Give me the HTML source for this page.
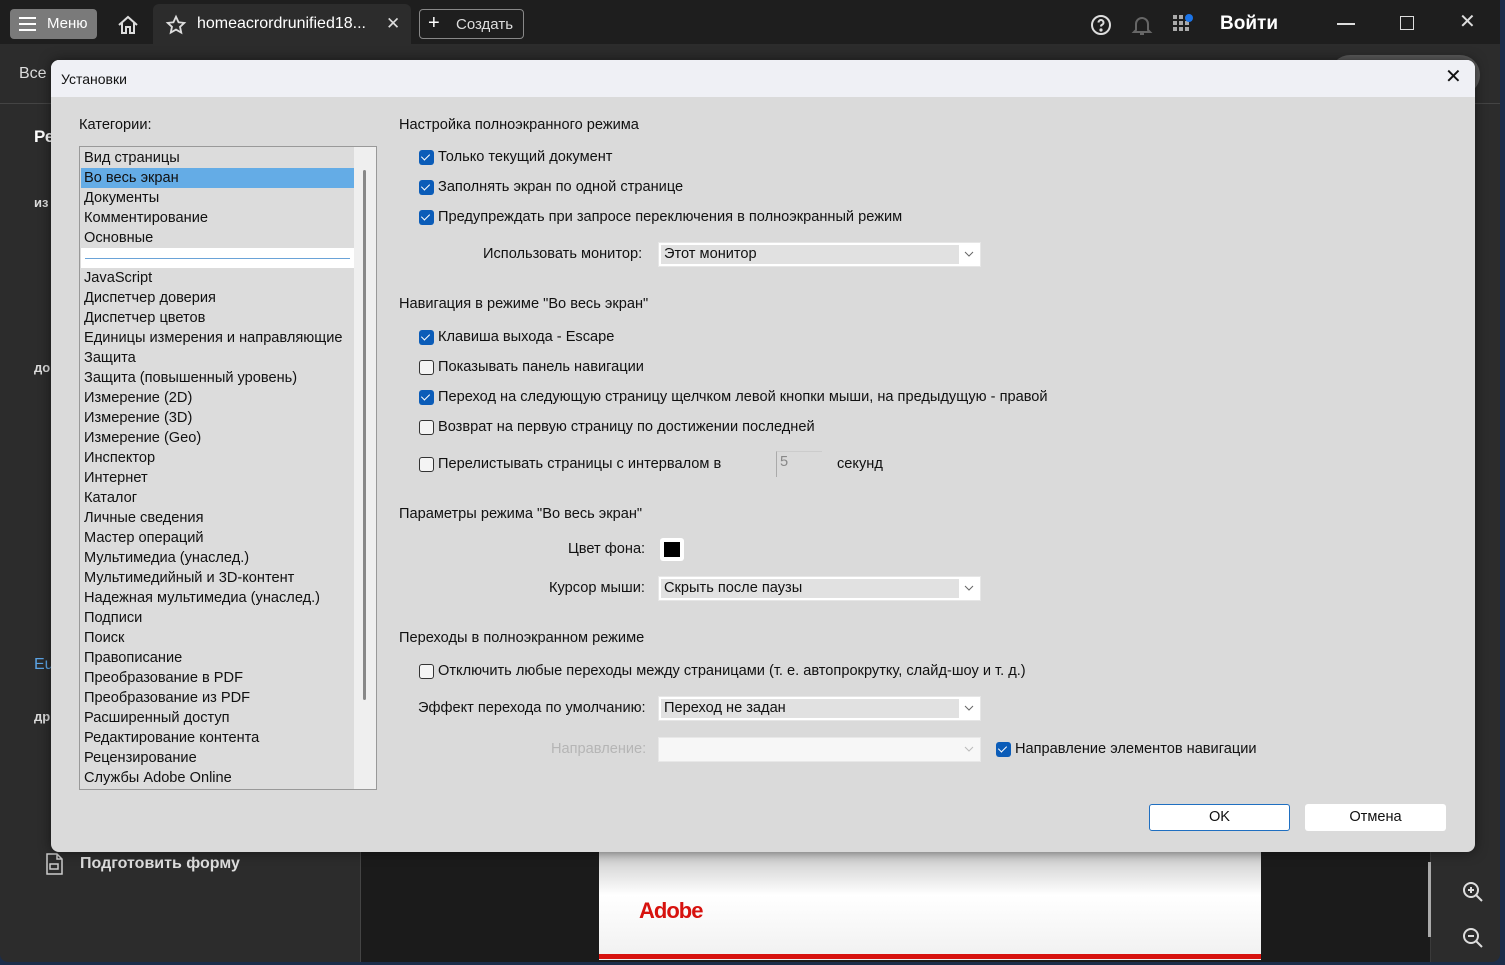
<!DOCTYPE html>
<html><head><meta charset="utf-8"><style>
*{margin:0;padding:0;box-sizing:border-box}
body{width:1505px;height:965px;overflow:hidden;background:#1c2d4a;font-family:"Liberation Sans",Arial,sans-serif;position:relative}
.a{position:absolute}
.t{position:absolute;font-size:14.6px;color:#111;white-space:nowrap;line-height:20px}
.cb{position:absolute;width:15px;height:15px;border-radius:3px}
.on{background:#0b5cb8}
.on::after{content:"";position:absolute;left:4px;top:2px;width:4px;height:7px;border:solid #fff;border-width:0 1.5px 1.5px 0;transform:rotate(45deg)}
.off{border:1px solid #333;background:#f4f4f4}
.sel{position:absolute;left:658px;width:323px;height:25px;background:#fff;border:1px solid #e6e6e6}
.sel .in{position:absolute;left:2px;top:2px;width:298px;height:19px;background:#e1e1e1;font-size:14.6px;line-height:19px;padding-left:3px;color:#111}
.sel svg{position:absolute;right:6px;top:8px}
.li{position:absolute;left:84px;font-size:14.6px;line-height:20px;color:#111;white-space:nowrap}
</style></head><body>
<div class="a" style="left:0;top:0;width:1500px;height:962px;background:#2c2c2c;border-radius:0 0 8px 8px;overflow:hidden">
 <div class="a" style="left:0;top:0;width:1500px;height:44px;background:#1e1e1e"></div>
 <div class="a" style="left:153px;top:4px;width:258px;height:40px;background:#2c2c2c;border-radius:6px 6px 0 0"></div>
 <div class="a" style="left:10px;top:9px;width:87px;height:30px;background:#7a7a7a;border-radius:4px"></div>
 <div class="a" style="left:19px;top:17px;width:17px;height:2px;background:#fff;box-shadow:0 6px 0 #fff,0 12px 0 #fff"></div>
 <div class="t" style="left:47px;top:14px;color:#fff;font-size:15px">Меню</div>
 <svg class="a" style="left:116px;top:13px" width="24" height="24" viewBox="0 0 24 24" fill="none" stroke="#ddd" stroke-width="2"><path d="M3 12L12 4l9 8M6 10v10h4v-6h4v6h4V10"/></svg>
 <svg class="a" style="left:165px;top:14px" width="22" height="22" viewBox="0 0 24 24" fill="none" stroke="#ddd" stroke-width="2"><path d="M12 3l2.8 6 6.2.7-4.6 4.3 1.3 6.3L12 17l-5.7 3.3 1.3-6.3L3 9.7 9.2 9z"/></svg>
 <div class="t" style="left:197px;top:14px;color:#fff;font-size:16px">homeacrordrunified18...</div>
 <div class="t" style="left:386px;top:14px;color:#ddd;font-size:17px">✕</div>
 <div class="a" style="left:419px;top:9px;width:105px;height:30px;border:1px solid #888;border-radius:4px"></div>
 <div class="t" style="left:428px;top:13px;color:#fff;font-size:20px">+</div>
 <div class="t" style="left:456px;top:15px;color:#ddd;font-size:15px">Создать</div>
 <svg class="a" style="left:1090px;top:14px" width="22" height="22" viewBox="0 0 22 22" fill="none" stroke="#ddd" stroke-width="2"><circle cx="11" cy="11" r="9"/><path d="M8.5 8.5a2.5 2.5 0 1 1 3.5 2.3c-.8.4-1 1-1 1.7"/><circle cx="11" cy="16" r=".6" fill="#ddd"/></svg>
 <svg class="a" style="left:1131px;top:14px" width="22" height="22" viewBox="0 0 22 22" fill="none" stroke="#666" stroke-width="2"><path d="M5 16V10a6 6 0 0 1 12 0v6l2 2H3zM9 20h4"/></svg>
 <svg class="a" style="left:1172px;top:14px" width="22" height="20"><g fill="#aaa"><rect x="1" y="1" width="4" height="4"/><rect x="7" y="1" width="4" height="4"/><rect x="1" y="7" width="4" height="4"/><rect x="7" y="7" width="4" height="4"/><rect x="13" y="7" width="4" height="4"/><rect x="1" y="13" width="4" height="4"/><rect x="7" y="13" width="4" height="4"/><rect x="13" y="13" width="4" height="4"/></g><circle cx="17" cy="4" r="4" fill="#1b74e8"/></svg>
 <div class="t" style="left:1220px;top:14px;color:#fff;font-size:19px;font-weight:bold">Войти</div>
 <div class="a" style="left:1337px;top:23px;width:18px;height:2px;background:#ddd"></div>
 <div class="a" style="left:1400px;top:16px;width:14px;height:14px;border:1.5px solid #ddd"></div>
 <div class="t" style="left:1459px;top:12px;color:#ddd;font-size:20px">✕</div>
 <div class="a" style="left:0;top:103px;width:1500px;height:1px;background:#444"></div>
 <div class="t" style="left:19px;top:64px;color:#ddd;font-size:16px">Все</div>
 <div class="a" style="left:1330px;top:55px;width:150px;height:40px;background:#5a5a5a;border-radius:20px"></div>
 <div class="t" style="left:34px;top:127px;color:#fff;font-size:17px;font-weight:bold">Ре</div>
 <div class="t" style="left:34px;top:193px;color:#ddd;font-size:13px;font-weight:bold">из</div>
 <div class="t" style="left:34px;top:358px;color:#ddd;font-size:13px;font-weight:bold">до</div>
 <div class="t" style="left:34px;top:655px;color:#5ba4e6;font-size:16px">Eu</div>
 <div class="t" style="left:34px;top:707px;color:#ddd;font-size:13px;font-weight:bold">др</div>
 <div class="a" style="left:360px;top:852px;width:1070px;height:110px;background:#1b1b1b;border-left:1px solid #444"></div>
 <div class="a" style="left:599px;top:852px;width:662px;height:108px;background:linear-gradient(#c8c8c8,#fff 40%,#f0f0f0)"></div>
 <div class="a" style="left:599px;top:954px;width:662px;height:5px;background:#d7120e"></div>
 <div class="t" style="left:639px;top:901px;color:#d7120e;font-size:22px;font-weight:bold;letter-spacing:-1px">Adobe</div>
 <div class="a" style="left:1430px;top:104px;width:1px;height:858px;background:#3a3a3a"></div>
 <div class="a" style="left:1428px;top:862px;width:3px;height:75px;background:#aaa"></div>
 <svg class="a" style="left:1461px;top:880px" width="24" height="24" fill="none" stroke="#ddd" stroke-width="2"><circle cx="10" cy="10" r="7"/><path d="M15 15l6 6M7 10h6M10 7v6"/></svg>
 <svg class="a" style="left:1461px;top:926px" width="24" height="24" fill="none" stroke="#ddd" stroke-width="2"><circle cx="10" cy="10" r="7"/><path d="M15 15l6 6M7 10h6"/></svg>
 <svg class="a" style="left:44px;top:852px" width="22" height="24" fill="none" stroke="#ccc" stroke-width="1.5"><path d="M3 2h10l5 5v15H3zM13 2v5h5"/><rect x="6" y="12" width="8" height="5"/></svg>
 <div class="t" style="left:80px;top:854px;color:#ddd;font-size:16px;font-weight:bold">Подготовить форму</div>
</div>
<div class="a" style="left:51px;top:60px;width:1424px;height:792px;background:#dadada;border-radius:8px;overflow:hidden;box-shadow:0 0 12px rgba(0,0,0,.5)">
 <div class="a" style="left:0;top:0;width:1424px;height:37px;background:#eff0f5"></div>
</div>
<div class="t" style="left:61px;top:69px;font-size:14px">Установки</div>
<div class="t" style="left:1445px;top:67px;font-size:20px">✕</div>
<div class="t" style="left:79px;top:115px">Категории:</div>
<div class="a" style="left:79px;top:146px;width:298px;height:644px;border:1px solid #999;background:#dcdcdc"></div>
<div class="a" style="left:354px;top:147px;width:22px;height:642px;background:#efefef"></div>
<div class="a" style="left:363px;top:170px;width:3px;height:530px;background:#888;border-radius:2px"></div>
<div class="a" style="left:81px;top:168px;width:273px;height:20px;background:#64ace6"></div>
<div class="a" style="left:81px;top:248px;width:273px;height:20px;background:#fff"></div>
<div class="a" style="left:85px;top:258px;width:265px;height:1px;background:#6aa3d8"></div>
<div class="li" style="top:148px">Вид страницы</div>
<div class="li" style="top:168px">Во весь экран</div>
<div class="li" style="top:188px">Документы</div>
<div class="li" style="top:208px">Комментирование</div>
<div class="li" style="top:228px">Основные</div>
<div class="li" style="top:268px">JavaScript</div>
<div class="li" style="top:288px">Диспетчер доверия</div>
<div class="li" style="top:308px">Диспетчер цветов</div>
<div class="li" style="top:328px">Единицы измерения и направляющие</div>
<div class="li" style="top:348px">Защита</div>
<div class="li" style="top:368px">Защита (повышенный уровень)</div>
<div class="li" style="top:388px">Измерение (2D)</div>
<div class="li" style="top:408px">Измерение (3D)</div>
<div class="li" style="top:428px">Измерение (Geo)</div>
<div class="li" style="top:448px">Инспектор</div>
<div class="li" style="top:468px">Интернет</div>
<div class="li" style="top:488px">Каталог</div>
<div class="li" style="top:508px">Личные сведения</div>
<div class="li" style="top:528px">Мастер операций</div>
<div class="li" style="top:548px">Мультимедиа (унаслед.)</div>
<div class="li" style="top:568px">Мультимедийный и 3D-контент</div>
<div class="li" style="top:588px">Надежная мультимедиа (унаслед.)</div>
<div class="li" style="top:608px">Подписи</div>
<div class="li" style="top:628px">Поиск</div>
<div class="li" style="top:648px">Правописание</div>
<div class="li" style="top:668px">Преобразование в PDF</div>
<div class="li" style="top:688px">Преобразование из PDF</div>
<div class="li" style="top:708px">Расширенный доступ</div>
<div class="li" style="top:728px">Редактирование контента</div>
<div class="li" style="top:748px">Рецензирование</div>
<div class="li" style="top:768px">Службы Adobe Online</div>

<div class="t" style="left:399px;top:115px">Настройка полноэкранного режима</div>
<div class="cb on" style="left:419px;top:150px"></div><div class="t" style="left:438px;top:147px">Только текущий документ</div>
<div class="cb on" style="left:419px;top:180px"></div><div class="t" style="left:438px;top:177px">Заполнять экран по одной странице</div>
<div class="cb on" style="left:419px;top:210px"></div><div class="t" style="left:438px;top:207px">Предупреждать при запросе переключения в полноэкранный режим</div>
<div class="t" style="left:483px;top:244px">Использовать монитор:</div>
<div class="sel" style="top:242px"><div class="in">Этот монитор</div><svg width="10" height="6"><path d="M1 1l4 4 4-4" stroke="#666" fill="none"/></svg></div>

<div class="t" style="left:399px;top:294px">Навигация в режиме "Во весь экран"</div>
<div class="cb on" style="left:419px;top:330px"></div><div class="t" style="left:438px;top:327px">Клавиша выхода - Escape</div>
<div class="cb off" style="left:419px;top:360px"></div><div class="t" style="left:438px;top:357px">Показывать панель навигации</div>
<div class="cb on" style="left:419px;top:390px"></div><div class="t" style="left:438px;top:387px">Переход на следующую страницу щелчком левой кнопки мыши, на предыдущую - правой</div>
<div class="cb off" style="left:419px;top:420px"></div><div class="t" style="left:438px;top:417px">Возврат на первую страницу по достижении последней</div>
<div class="cb off" style="left:419px;top:457px"></div><div class="t" style="left:438px;top:454px">Перелистывать страницы с интервалом в</div>
<div class="a" style="left:776px;top:451px;width:46px;height:26px;border-left:1px solid #aaa;border-top:1px solid #ccc"></div>
<div class="t" style="left:780px;top:452px;color:#888">5</div>
<div class="t" style="left:837px;top:454px">секунд</div>

<div class="t" style="left:399px;top:504px">Параметры режима "Во весь экран"</div>
<div class="t" style="left:568px;top:539px">Цвет фона:</div>
<div class="a" style="left:660px;top:538px;width:24px;height:23px;background:#fff;border-radius:3px"></div>
<div class="a" style="left:664px;top:542px;width:16px;height:15px;background:#000"></div>
<div class="t" style="left:549px;top:578px">Курсор мыши:</div>
<div class="sel" style="top:576px"><div class="in">Скрыть после паузы</div><svg width="10" height="6"><path d="M1 1l4 4 4-4" stroke="#666" fill="none"/></svg></div>

<div class="t" style="left:399px;top:628px">Переходы в полноэкранном режиме</div>
<div class="cb off" style="left:419px;top:664px"></div><div class="t" style="left:438px;top:661px">Отключить любые переходы между страницами (т. е. автопрокрутку, слайд-шоу и т. д.)</div>
<div class="t" style="left:418px;top:698px">Эффект перехода по умолчанию:</div>
<div class="sel" style="top:696px"><div class="in">Переход не задан</div><svg width="10" height="6"><path d="M1 1l4 4 4-4" stroke="#666" fill="none"/></svg></div>
<div class="t" style="left:551px;top:739px;color:#b5b5b5">Направление:</div>
<div class="sel" style="top:737px;background:#f7f7f7;border-color:#e8e8e8"><svg width="10" height="6"><path d="M1 1l4 4 4-4" stroke="#bbb" fill="none"/></svg></div>
<div class="cb on" style="left:996px;top:742px"></div><div class="t" style="left:1015px;top:739px">Направление элементов навигации</div>

<div class="a" style="left:1149px;top:804px;width:141px;height:27px;background:#fff;border:1px solid #1f6fc1;border-radius:3px;text-align:center;font-size:14.6px;line-height:25px;color:#111">OK</div>
<div class="a" style="left:1305px;top:804px;width:141px;height:27px;background:#fff;border-radius:3px;text-align:center;font-size:14.6px;line-height:27px;color:#111">Отмена</div>
</body></html>
